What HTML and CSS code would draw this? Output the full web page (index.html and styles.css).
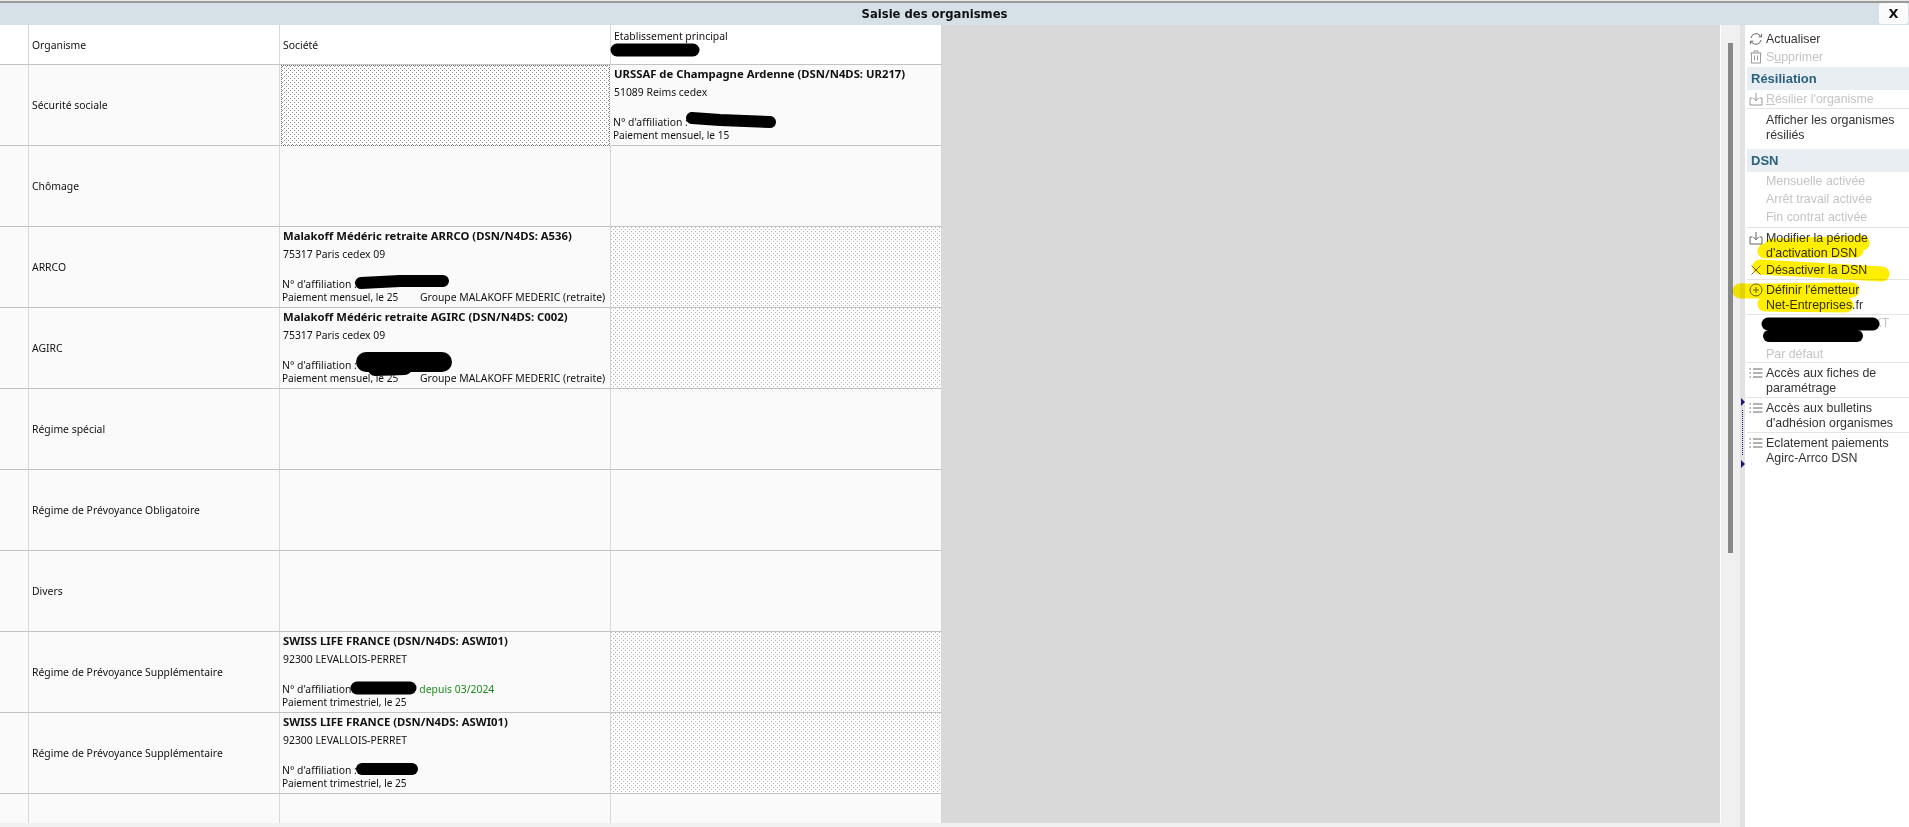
FILE: index.html
```html
<!DOCTYPE html>
<html lang="fr">
<head>
<meta charset="utf-8">
<title>Saisie des organismes</title>
<link rel="stylesheet" href="styles.css">
</head>
<body>
<div class="page">
  <header class="titlebar">
    <div class="title">Saisie des organismes</div>
    <button class="close">X</button>
  </header>
  <div class="main">
    <div class="left">
      <div class="content">
        <div class="table">
          <div class="cell head"></div><div class="cell head label">Organisme</div><div class="cell head text">Société</div>
          <div class="cell head etab">Etablissement principal</div>

          <div class="cell"></div><div class="cell label">Sécurité sociale</div><div class="cell hatch focus"></div>
          <div class="cell org">
            <div class="name">URSSAF de Champagne Ardenne (DSN/N4DS: UR217)</div>
            <div class="addr">51089 Reims cedex</div>
            <div class="aff">N° d'affiliation :</div>
            <div class="pay">Paiement mensuel, le 15</div>
          </div>

          <div class="cell"></div><div class="cell label">Chômage</div><div class="cell"></div><div class="cell"></div>

          <div class="cell"></div><div class="cell label">ARRCO</div>
          <div class="cell org">
            <div class="name">Malakoff Médéric retraite ARRCO (DSN/N4DS: A536)</div>
            <div class="addr">75317 Paris cedex 09</div>
            <div class="aff">N° d'affiliation :</div>
            <div class="pay"><span class="term">Paiement mensuel, le 25</span><span class="group">Groupe MALAKOFF MEDERIC (retraite)</span></div>
          </div>
          <div class="cell hatch"></div>

          <div class="cell"></div><div class="cell label">AGIRC</div>
          <div class="cell org">
            <div class="name">Malakoff Médéric retraite AGIRC (DSN/N4DS: C002)</div>
            <div class="addr">75317 Paris cedex 09</div>
            <div class="aff">N° d'affiliation :</div>
            <div class="pay"><span class="term">Paiement mensuel, le 25</span><span class="group">Groupe MALAKOFF MEDERIC (retraite)</span></div>
          </div>
          <div class="cell hatch"></div>

          <div class="cell"></div><div class="cell label">Régime spécial</div><div class="cell"></div><div class="cell"></div>
          <div class="cell"></div><div class="cell label">Régime de Prévoyance Obligatoire</div><div class="cell"></div><div class="cell"></div>
          <div class="cell"></div><div class="cell label">Divers</div><div class="cell"></div><div class="cell"></div>

          <div class="cell"></div><div class="cell label">Régime de Prévoyance Supplémentaire</div>
          <div class="cell org">
            <div class="name">SWISS LIFE FRANCE (DSN/N4DS: ASWI01)</div>
            <div class="addr">92300 LEVALLOIS-PERRET</div>
            <div class="aff">N° d'affiliation<span class="since">depuis 03/2024</span></div>
            <div class="pay">Paiement trimestriel, le 25</div>
          </div>
          <div class="cell hatch"></div>

          <div class="cell"></div><div class="cell label">Régime de Prévoyance Supplémentaire</div>
          <div class="cell org">
            <div class="name">SWISS LIFE FRANCE (DSN/N4DS: ASWI01)</div>
            <div class="addr">92300 LEVALLOIS-PERRET</div>
            <div class="aff">N° d'affiliation :</div>
            <div class="pay">Paiement trimestriel, le 25</div>
          </div>
          <div class="cell hatch"></div>

          <div class="cell end"></div><div class="cell end"></div><div class="cell end"></div><div class="cell end"></div>
        </div>
        <div class="void"></div>
        <div class="track"><div class="thumb"></div></div>
      </div>
    </div>
    <div class="splitter">
      <span class="arrow"></span>
      <span class="dots"></span>
      <span class="arrow"></span>
    </div>
    <aside class="panel">
      <div class="item"><span class="ico"><svg viewBox="0 0 14 14"><path d="M2 6a5.200 5.200 0 0 1 9-2.600l1.300 1.300M12.600 1.800v3h-3M12 8a5.200 5.200 0 0 1-9 2.600L1.700 9.300M1.400 12.200v-3h3"/></svg></span><span>Actualiser</span></div>
      <div class="item off"><span class="ico"><svg viewBox="0 0 14 14"><path d="M1.500 3h11M5 3V1h4v2M2.500 3v10h9V3M5.500 5.500v5M8.500 5.500v5"/></svg></span><span>S<u>u</u>pprimer</span></div>
      <div class="band first">Résiliation</div>
      <div class="item off rule"><span class="ico"><svg viewBox="0 0 14 14"><path d="M7 1v7.500M4.500 6 7 8.800 9.500 6M3.500 6H1v7h12V6h-2.500"/></svg></span><span><u>R</u>ésilier l'organisme</span></div>
      <div class="item lead"><span class="ico"></span><span>Afficher les organismes<br>résiliés</span></div>
      <div class="band">DSN</div>
      <div class="item off"><span class="ico"></span><span>Mensuelle activée</span></div>
      <div class="item off"><span class="ico"></span><span>Arrêt travail activée</span></div>
      <div class="item off rule tail"><span class="ico"></span><span>Fin contrat activée</span></div>
      <div class="item tight"><span class="ico"><svg viewBox="0 0 14 14"><path d="M7 1v7.500M4.500 6 7 8.800 9.500 6M3.500 6H1v7h12V6h-2.500"/></svg></span><span>Modifier la période<br>d'activation DSN</span></div>
      <div class="item rule snug"><span class="ico"><svg viewBox="0 0 14 14"><path d="M2.500 2.500l9 9M11.500 2.500l-9 9"/></svg></span><span>Désactiver la DSN</span></div>
      <div class="item wrap rule"><span class="ico"><svg viewBox="0 0 14 14"><circle cx="7" cy="7" r="6"/><path d="M7 4v6M4 7h6"/></svg></span><span>Définir l'émetteur<br>Net-Entreprises.fr</span></div>
      <div class="item off person"><span class="ico"></span><span>XXXXXXXXXXXXXXT<br>XXXXXXXXXXX</span></div>
      <div class="item off rule last"><span class="ico"></span><span>Par défaut</span></div>
      <div class="item wrap rule"><span class="ico"><svg viewBox="0 0 14 14"><path d="M4 3h9.500M4 7h9.500M4 11h9.500M.5 3h1.500M.5 7h1.500M.5 11h1.500"/></svg></span><span>Accès aux fiches de<br>paramétrage</span></div>
      <div class="item wrap rule"><span class="ico"><svg viewBox="0 0 14 14"><path d="M4 3h9.500M4 7h9.500M4 11h9.500M.5 3h1.500M.5 7h1.500M.5 11h1.500"/></svg></span><span>Accès aux bulletins<br>d'adhésion organismes</span></div>
      <div class="item wrap"><span class="ico"><svg viewBox="0 0 14 14"><path d="M4 3h9.500M4 7h9.500M4 11h9.500M.5 3h1.500M.5 7h1.500M.5 11h1.500"/></svg></span><span>Eclatement paiements<br>Agirc-Arrco DSN</span></div>
    </aside>
  </div>
  <svg class="marks" viewBox="0 0 1909 827" aria-hidden="true">
    <g class="marker">
      <path d="M1772 246 L1862 243 L1765 251 L1856 250" stroke-width="15"/>
      <path d="M1760 267 L1882 274" stroke-width="15"/>
      <path d="M1740 291 L1852 290 L1765 304 L1846 305" stroke-width="15"/>
    </g>
    <g class="scribble">
      <path d="M617 50 L693 50" stroke-width="13"/>
      <path d="M692 118 L720 120 L770 122" stroke-width="12"/>
      <path d="M361 283 L400 281 L443 281" stroke-width="12"/>
      <path d="M366 362 L442 362" stroke-width="20"/>
      <path d="M375 369 L405 368" stroke-width="14"/>
      <path d="M357 688 L410 688" stroke-width="13"/>
      <path d="M362 769 L412 769" stroke-width="12"/>
      <path d="M1768 324 L1873 324" stroke-width="13"/>
      <path d="M1769 336 L1857 336" stroke-width="12"/>
    </g>
  </svg>
</div>
</body>
</html>
```
FILE: styles.css
```css
* { box-sizing: border-box; }
html, body { margin: 0; height: 100%; overflow: hidden; }
.page {
  position: relative;
  width: 1909px;
  height: 827px;
  display: flex;
  flex-direction: column;
  background: #f0f0f0;
  color: #111;
  font-family: "Noto Sans", "Liberation Sans", sans-serif;
}
.titlebar {
  flex: 0 0 25px;
  display: flex;
  align-items: center;
  padding: 3px 1px 1px 0;
  background: linear-gradient(#e8e8e8 0 1px, #9a9a9a 1px 3px, #d6e1e7 3px);
}
.title {
  flex: 1;
  text-align: center;
  font-family: "DejaVu Sans", sans-serif;
  font-size: 11.6px;
  font-weight: 700;
  color: #111;
}
.close {
  width: 29px;
  height: 21px;
  margin-left: 10px;
  padding: 0;
  border: 0;
  border-radius: 3px;
  background: #fbfbfb;
  font-family: "DejaVu Sans", sans-serif;
  font-size: 13px;
  font-weight: 700;
  color: #111;
}
.main { flex: 1; display: flex; min-height: 0; }
.left { flex: 0 0 1740px; padding-bottom: 4px; }
.content { height: 100%; display: flex; }
.table {
  flex: 0 0 942px;
  display: grid;
  grid-template-columns: 29px 251px 331px 331px;
  grid-template-rows: 40px repeat(9, 81px) 29px;
  background: #fafafa;
  font-size: 10.4px;
  overflow: hidden;
}
.cell {
  min-width: 0;
  border-right: 1px solid #d8d8d8;
  border-bottom: 1px solid #c2c2c2;
}
.end { border-bottom: 0; }
.head { background: #fff; }
.label, .text { display: flex; align-items: center; padding-left: 3px; }
.etab { padding: 4px 0 0 3px; line-height: 14px; }
.hatch {
  background-color: #fff;
  background-image:
    conic-gradient(at 1px 1px, transparent 75%, #b4b4b4 0),
    conic-gradient(at 1px 1px, transparent 75%, #b4b4b4 0);
  background-size: 4px 4px;
  background-position: 0 0, 2px 2px;
}
.focus {
  border: 1px dotted #777;
  margin: 0 1px 0 1px;
  background-image:
    conic-gradient(at 1px 1px, transparent 75%, #8e8e8e 0),
    conic-gradient(at 1px 1px, transparent 75%, #8e8e8e 0);
}
.org { padding: 0 0 0 3px; white-space: nowrap; }
.name { height: 18px; line-height: 18px; font-size: 11.3px; font-weight: 700; }
.addr { height: 18px; line-height: 18px; }
.aff { height: 13px; line-height: 13px; margin: 15px 0 0 -1px; }
.pay { height: 13px; line-height: 13px; margin-left: -1px; font-size: 10.1px; }
.term { display: inline-block; width: 138px; }
.group { font-size: 10.4px; }
.since { margin-left: 68px; color: #1c8a1c; }
.void {
  flex: 1;
  background: #d9d9d9;
  border-right: 1px solid #fff;
}
.track { flex: 0 0 19px; padding: 18px 0 0 7px; }
.thumb { width: 5px; height: 510px; background: #888; }
.splitter {
  flex: 0 0 5px;
  background: #e2e2e2;
  display: flex;
  flex-direction: column;
  align-items: center;
  padding-top: 373px;
}
.arrow {
  width: 0;
  height: 0;
  border-left: 4px solid #22127a;
  border-top: 4px solid transparent;
  border-bottom: 4px solid transparent;
}
.dots {
  flex: 0 0 45px;
  width: 1px;
  margin: 4px 0 5px;
  border-left: 1px dotted #22127a;
}
.panel {
  flex: 1;
  background: #fff;
  padding: 5px 0 0 2px;
  font-family: "Liberation Sans", Arial, sans-serif;
  font-size: 12.4px;
  line-height: 15px;
  color: #333;
}
.item { display: flex; padding: 2px 0 1px; white-space: nowrap; }
.ico { flex: 0 0 19px; padding-left: 2px; height: 15px; }
.ico svg {
  display: block;
  width: 14px;
  height: 14px;
  fill: none;
  stroke: #666;
  stroke-width: 1;
}
.off { color: #c4c4c4; }
.off svg { stroke: #999; }
.rule { border-bottom: 1px solid #e4e4e4; }
.band {
  height: 23px;
  padding-left: 4px;
  line-height: 23px;
  background: #e8eef2;
  font-size: 13px;
  font-weight: 700;
  color: #2b617f;
}
.first { margin-top: 1px; }
.lead { padding: 4px 0 6px; }
.tail { padding-bottom: 2px; }
.tight { padding: 3px 0 0; }
.snug { padding: 2px 0 1px; }
.wrap { padding: 3px 0 1px; }
.person { padding: 1px 0 0; }
.last { padding: 1px 0 0; }
.marks {
  position: absolute;
  inset: 0;
  width: 1909px;
  height: 827px;
  pointer-events: none;
}
.marks path {
  fill: none;
  stroke-linecap: round;
  stroke-linejoin: round;
}
.marker { stroke: #ffee00; mix-blend-mode: multiply; }
.scribble { stroke: #000; }
```
